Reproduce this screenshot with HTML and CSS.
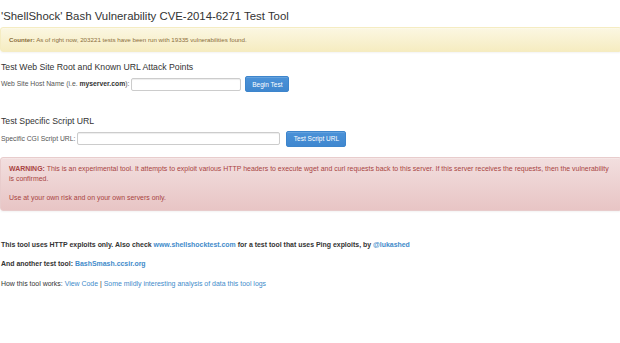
FILE: index.html
```html
<!DOCTYPE html>
<html>
<head>
<meta charset="utf-8">
<title>ShellShock Test Tool</title>
<link rel="stylesheet" href="styles.css">
</head>
<body>
<div class="page">
  <h1 class="title">'ShellShock' Bash Vulnerability CVE-2014-6271 Test Tool</h1>
  <div class="alert alert-warning">
    <p class="small"><b>Counter:</b> As of right now, 203221 tests have been run with 19335 vulnerabilities found.</p>
  </div>

  <h4 class="section first">Test Web Site Root and Known URL Attack Points</h4>
  <form class="row">
    <label class="lbl">Web Site Host Name (i.e. <b>myserver.com</b>):</label>
    <input class="inp inp-host" type="text">
    <button class="btn btn-begin" type="button">Begin Test</button>
  </form>

  <h4 class="section second">Test Specific Script URL</h4>
  <form class="row">
    <label class="lbl">Specific CGI Script URL:</label>
    <input class="inp inp-url" type="text">
    <button class="btn btn-script" type="button">Test Script URL</button>
  </form>

  <div class="alert alert-danger">
    <p><b>WARNING:</b> This is an experimental tool. It attempts to exploit various HTTP headers to execute wget and curl requests back to this server. If this server receives the requests, then the vulnerability is confirmed.</p>
    <p class="gap">Use at your own risk and on your own servers only.</p>
  </div>

  <div class="footer">
    <p><b>This tool uses HTTP exploits only. Also check <a href="#">www.shellshocktest.com</a> for a test tool that uses Ping exploits, by <a href="#">@lukashed</a></b></p>
    <p><b>And another test tool: <a href="#">BashSmash.ccsir.org</a></b></p>
    <p>How this tool works: <a href="#" class="plain">View Code</a> | <a href="#" class="plain">Some mildly interesting analysis of data this tool logs</a></p>
  </div>
</div>
</body>
</html>
```
FILE: styles.css
```css
* { box-sizing: border-box; }
html, body { margin: 0; padding: 0; background: #fff; }
body {
  font-family: "Liberation Sans", Arial, Helvetica, sans-serif;
  font-size: 6.95px;
  line-height: 10px;
  color: #333;
}
.page { width: 620px; padding: 0; }
p { margin: 0; }
.title {
  font-size: 11.4px;
  font-weight: normal;
  line-height: 12px;
  margin: 10px 0 5px 1px;
  color: #333;
}
.alert {
  border: 1px solid;
  border-radius: 3px;
  padding: 6.5px 8px;
  width: 622px;
  box-shadow: inset 0 1px 0 rgba(255,255,255,.25), 0 1px 2px rgba(0,0,0,.05);
}
.alert .small { font-size: 6.2px; }
.alert-warning {
  color: #8a6d3b;
  border-color: #f5ecc2;
  background: linear-gradient(to bottom, #fbf7e2 0%, #f6ecc1 100%);
}
.alert-danger {
  color: #a94442;
  border-color: #e8cccc;
  background: linear-gradient(to bottom, #f2dfdf 0%, #e8c5c5 100%);
  margin-top: 10px;
}
.alert-danger .gap { margin-top: 9px; }
.section {
  font-size: 8.7px;
  font-weight: normal;
  line-height: 9px;
  margin: 0 0 4.5px 1px;
  color: #333;
}
.section.first { margin-top: 10.5px; }
.section.second { margin-top: 25px; }
.row {
  display: flex;
  align-items: center;
  height: 16px;
  margin: 0 0 0 1px;
}
.lbl { color: #555; font-size: 6.8px; }
.lbl b { color: #333; }
.inp {
  height: 13px;
  border: 1px solid #ccc;
  border-radius: 2px;
  box-shadow: inset 0 1px 1px rgba(0,0,0,.075);
  margin: 0 0 0 2px;
  padding: 0 4px;
  font-size: 6.2px;
}
.inp-host { width: 110px; }
.inp-url { width: 203px; }
.btn {
  height: 16px;
  margin-left: 4px;
  padding: 0;
  text-align: center;
  font-family: inherit;
  font-size: 6.5px;
  color: #fff;
  border: 1px solid #3d85cc;
  border-radius: 2px;
  background: linear-gradient(to bottom, #4b92d8 0%, #3f87cf 100%);
  box-shadow: inset 0 1px 0 rgba(255,255,255,.15);
}
.btn-begin { width: 44px; }
.btn-script { width: 60px; margin-left: 6px; }
.footer { margin-top: 29px; margin-left: 1px; }
.footer p { margin-bottom: 9.5px; }
.footer b { color: #333; }
a { color: #428bca; text-decoration: none; }
a.plain { font-weight: normal; }
```
